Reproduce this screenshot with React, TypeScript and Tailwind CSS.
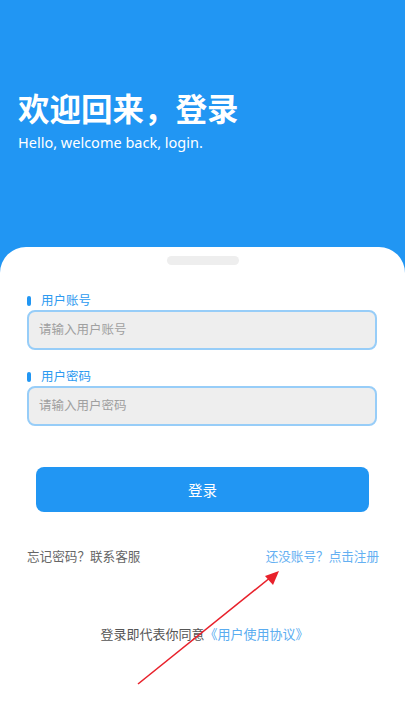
import React from "react";

const FONT = "font-['Noto_Sans','Noto_Sans_CJK_SC',sans-serif]";

function Field({ label, placeholder }: { label: string; placeholder: string }) {
  return (
    <div className="px-[27px] pr-[28px]">
      <div className="flex h-[18px] items-center gap-[10px]">
        <span className="h-[10px] w-[4px] rounded-full bg-[#2196f3]" />
        <span className="text-[12.5px] leading-[18px] text-[#2d9af0]">{label}</span>
      </div>
      <div className="flex h-[40px] items-center rounded-[8px] border-2 border-[#97cdf8] bg-[#eeeeee] px-[10px]">
        <span className="text-[12.5px] text-[#a0a0a0]">{placeholder}</span>
      </div>
    </div>
  );
}

export default function App() {
  return (
    <div className={`relative h-[720px] w-full overflow-hidden bg-[#2196f3] ${FONT}`}>
      <div className="h-[247px] px-[18px] pt-[91px] text-white">
        <h1 className="text-[31.5px] font-semibold leading-[36px]">欢迎回来，登录</h1>
        <p className="mt-[5px] text-[14.5px] leading-[20px]">Hello, welcome back, login.</p>
      </div>

      <div className="h-[473px] rounded-t-[26px] bg-white">
        <div className="flex justify-center pt-[9px]">
          <div className="h-[9px] w-[72px] rounded-full bg-[#eeeeee]" />
        </div>

        <div className="mt-[27px]">
          <Field label="用户账号" placeholder="请输入用户账号" />
        </div>
        <div className="mt-[18px]">
          <Field label="用户密码" placeholder="请输入用户密码" />
        </div>

        <div className="mt-[41px] px-[36px]">
          <button className="flex h-[45px] w-full items-center justify-center rounded-[8px] bg-[#2196f3] pt-[2px] text-[14.5px] text-white">
            登录
          </button>
        </div>

        <div className="mt-[36px] flex items-center justify-between pl-[27px] pr-[26px] text-[12.6px] leading-[18px]">
          <span className="text-[#666666]">忘记密码？联系客服</span>
          <span className="text-[#64b0f2]">还没账号？点击注册</span>
        </div>

        <p className="mt-[59px] pl-[4px] text-center text-[13px] leading-[18px] text-[#555555]">
          登录即代表你同意<span className="text-[#5aacf0]">《用户使用协议》</span>
        </p>
      </div>

      <svg className="pointer-events-none absolute left-0 top-0" width="405" height="720">
        <line x1="138" y1="684" x2="271" y2="577" stroke="#e8212b" strokeWidth="1.6" />
        <polygon points="279,571 265,576 273,585" fill="#e8212b" />
      </svg>
    </div>
  );
}
